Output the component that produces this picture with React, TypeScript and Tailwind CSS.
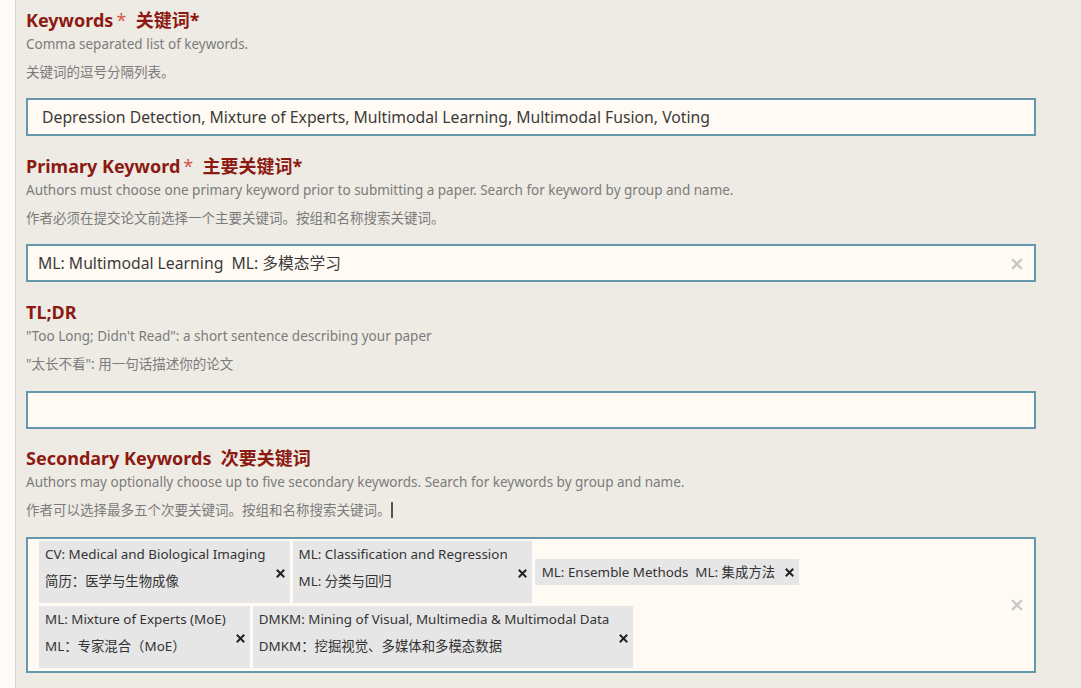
import React from 'react';

const font = { fontFamily: '"Noto Sans", "Noto Sans CJK SC", sans-serif' };

interface Chip {
  en: string;
  zh?: string;
}

const ClearX: React.FC = () => (
  <svg width="12" height="12" viewBox="0 0 12 12" className="shrink-0">
    <path d="M2 2 L10 10 M10 2 L2 10" stroke="#c8c8c8" strokeWidth="2.4" strokeLinecap="square" />
  </svg>
);

const ChipX: React.FC = () => (
  <svg width="9" height="9" viewBox="0 0 9 9" className="shrink-0">
    <path d="M1.5 1.5 L7.5 7.5 M7.5 1.5 L1.5 7.5" stroke="#222" strokeWidth="2" strokeLinecap="square" />
  </svg>
);

const Heading: React.FC<{ en: string; zh: string; required?: boolean }> = ({ en, zh, required }) => (
  <h3 className="text-[18px] leading-6 font-bold text-[#8c1a12] whitespace-pre">
    {en}
    {required && <span className="ml-[3px] font-normal text-[#d9534f]">*</span>}
    {'  '}
    {zh}
  </h3>
);

const Help: React.FC<{ en: string; zh: React.ReactNode }> = ({ en, zh }) => (
  <div className="text-[13.5px] leading-5 text-[#7b7b7b]">
    <p className="mt-[2px]">{en}</p>
    <p className="mt-2">{zh}</p>
  </div>
);

const chips: Chip[][] = [
  [
    { en: 'CV: Medical and Biological Imaging', zh: '简历：医学与生物成像' },
    { en: 'ML: Classification and Regression', zh: 'ML: 分类与回归' },
    { en: 'ML: Ensemble Methods  ML: 集成方法' },
  ],
  [
    { en: 'ML: Mixture of Experts (MoE)', zh: 'ML：专家混合（MoE）' },
    { en: 'DMKM: Mining of Visual, Multimedia & Multimodal Data', zh: 'DMKM：挖掘视觉、多媒体和多模态数据' },
  ],
];

const KeywordChip: React.FC<{ chip: Chip }> = ({ chip }) =>
  chip.zh ? (
    <div className="flex items-center bg-[#e6e6e6] pl-[6px] pr-[5px] h-[62px]">
      <div className="text-[13.4px] leading-5 text-[#333] pt-[2px] pb-[12px]">
        <p className="whitespace-pre">{chip.en}</p>
        <p className="mt-[7px] whitespace-pre">{chip.zh}</p>
      </div>
      <span className="ml-[10px] mt-[2px]">
        <ChipX />
      </span>
    </div>
  ) : (
    <div className="flex items-center bg-[#e6e6e6] pl-[7px] pr-[5px] h-[26px]">
      <span className="text-[13.4px] leading-5 text-[#333] whitespace-pre">{chip.en}</span>
      <span className="ml-[10px]">
        <ChipX />
      </span>
    </div>
  );

export default function App() {
  return (
    <div className="flex w-[1081px] h-[688px] overflow-hidden bg-[#eeebe4]" style={font}>
      <div className="w-4 shrink-0 bg-[#fdfbf7] border-r border-[#d8d4cc]" />
      <div className="pl-[10px] pt-2 w-[1020px] shrink-0">
        {/* Keywords */}
        <Heading en="Keywords" zh="关键词*" required />
        <Help en="Comma separated list of keywords." zh="关键词的逗号分隔列表。" />
        <div className="mt-4 h-[38px] border-2 border-[#6598ad] bg-[#fffaf3] flex items-center pt-px pl-[14px] text-[15.75px] text-[#3a3a3a]">
          Depression Detection, Mixture of Experts, Multimodal Learning, Multimodal Fusion, Voting
        </div>

        {/* Primary keyword */}
        <div className="mt-[18px]">
          <Heading en="Primary Keyword" zh="主要关键词*" required />
          <Help
            en="Authors must choose one primary keyword prior to submitting a paper. Search for keyword by group and name."
            zh="作者必须在提交论文前选择一个主要关键词。按组和名称搜索关键词。"
          />
          <div className="mt-4 h-[38px] border-2 border-[#6598ad] bg-[#fffaf3] flex items-center justify-between pt-px pl-[10px] pr-[11px] text-[15.75px] text-[#3a3a3a]">
            <span className="whitespace-pre">ML: Multimodal Learning  ML: 多模态学习</span>
            <ClearX />
          </div>
        </div>

        {/* TL;DR */}
        <div className="mt-[18px]">
          <Heading en="TL;DR" zh="" />
          <Help en={'"Too Long; Didn\'t Read": a short sentence describing your paper'} zh={'"太长不看": 用一句话描述你的论文'} />
          <div className="mt-[17px] h-[38px] border-2 border-[#6598ad] bg-[#fffaf3]" />
        </div>

        {/* Secondary keywords */}
        <div className="mt-[17px]">
          <Heading en="Secondary Keywords" zh="次要关键词" />
          <Help
            en="Authors may optionally choose up to five secondary keywords. Search for keywords by group and name."
            zh={
              <span className="inline-flex items-center">
                作者可以选择最多五个次要关键词。按组和名称搜索关键词。
                <span className="inline-block w-[2px] h-4 bg-[#555]" />
              </span>
            }
          />
          <div className="mt-[17px] h-[136px] border-2 border-[#6598ad] bg-[#fffaf3] flex items-center pl-[11px] pr-[11px]">
            <div className="flex-1 flex flex-col gap-[3px] pt-[2px] pb-[3px] self-stretch">
              {chips.map((row, i) => (
                <div key={i} className="flex items-center gap-[3px]">
                  {row.map((c, j) => (
                    <KeywordChip key={j} chip={c} />
                  ))}
                </div>
              ))}
            </div>
            <ClearX />
          </div>
        </div>
      </div>
    </div>
  );
}
